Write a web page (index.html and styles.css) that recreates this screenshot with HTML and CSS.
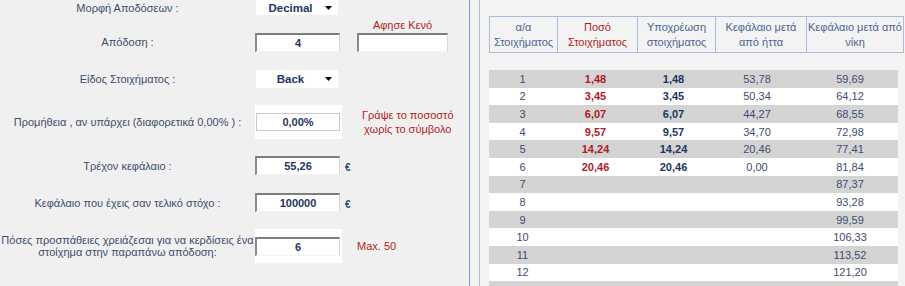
FILE: index.html
```html
<!DOCTYPE html>
<html lang="el">
<head>
    <meta charset="UTF-8">
    <title>Υπολογισμός Στοιχημάτων</title>
    <link rel="stylesheet" href="styles.css">
</head>
<body>
    <div class="page">
        <div class="calc">
            <div class="row row-format">
                <div class="label">Μορφή Αποδόσεων :</div>
                <div class="select"><span>Decimal</span><svg width="7" height="4" viewBox="0 0 7 4"><path d="M0 0h7L3.5 4z" fill="#000"/></svg></div>
            </div>
            <div class="row row-odds">
                <div class="label">Απόδοση :</div>
                <input class="field inset" type="text" value="4">
                <div class="extra">
                    <div class="note">Αφησε Κενό</div>
                    <input class="field inset field-wide" type="text" value="">
                </div>
            </div>
            <div class="row row-type">
                <div class="label">Είδος Στοιχήματος :</div>
                <div class="select"><span>Back</span><svg width="7" height="4" viewBox="0 0 7 4"><path d="M0 0h7L3.5 4z" fill="#000"/></svg></div>
            </div>
            <div class="row row-fee">
                <div class="label">Προμήθεια , αν υπάρχει (διαφορετικά 0,00% ) :</div>
                <div class="cell"><input class="field flat" type="text" value="0,00%"></div>
                <div class="note note-fee">Γράψε το ποσοστό<br>χωρίς το σύμβολο</div>
            </div>
            <div class="row row-bank">
                <div class="label">Τρέχον κεφάλαιο :</div>
                <input class="field inset" type="text" value="55,26">
                <div class="euro">€</div>
            </div>
            <div class="row row-target">
                <div class="label">Κεφάλαιο που έχεις σαν τελικό στόχο :</div>
                <input class="field inset" type="text" value="100000">
                <div class="euro">€</div>
            </div>
            <div class="row row-tries">
                <div class="label label-wrap">Πόσες προσπάθειες χρειάζεσαι για να κερδίσεις ένα<br>στοίχημα στην παραπάνω απόδοση:</div>
                <div class="cell"><input class="field inset" type="text" value="6"></div>
                <div class="note note-max">Max. 50</div>
            </div>
        </div>

        <div class="results">
            <div class="results-inner">
                <table class="head">
                    <tr>
                        <th class="c1">α/α<br>Στοιχήματος</th>
                        <th class="c2 red">Ποσό<br>Στοιχήματος</th>
                        <th class="c3">Υποχρέωση<br>στοιχήματος</th>
                        <th class="c4">Κεφάλαιο μετά<br>από ήττα</th>
                        <th class="c5">Κεφάλαιο μετά από<br>νίκη</th>
                    </tr>
                </table>
                <table class="rows" id="rows"></table>
            </div>
        </div>
    </div>

    <script>
        var data = [
            ['1', '1,48', '1,48', '53,78', '59,69'],
            ['2', '3,45', '3,45', '50,34', '64,12'],
            ['3', '6,07', '6,07', '44,27', '68,55'],
            ['4', '9,57', '9,57', '34,70', '72,98'],
            ['5', '14,24', '14,24', '20,46', '77,41'],
            ['6', '20,46', '20,46', '0,00', '81,84'],
            ['7', '', '', '', '87,37'],
            ['8', '', '', '', '93,28'],
            ['9', '', '', '', '99,59'],
            ['10', '', '', '', '106,33'],
            ['11', '', '', '', '113,52'],
            ['12', '', '', '', '121,20'],
            ['13', '', '', '', '129,40']
        ];

        var table = document.getElementById('rows');
        data.forEach(function(r) {
            var tr = document.createElement('tr');
            r.forEach(function(v, i) {
                var td = document.createElement('td');
                td.className = 'c' + (i + 1);
                td.textContent = v;
                tr.appendChild(td);
            });
            table.appendChild(tr);
        });
    </script>
</body>
</html>
```

FILE: styles.css
```css
body {
    font-family: 'Liberation Sans', Arial, sans-serif;
    font-size: 11px;
    margin: 0;
    padding: 0;
    background-color: #f0f0f0;
    color: #3d4d6e;
    overflow: hidden;
}

.page {
    display: flex;
    height: 286px;
}

/* left: form */

.calc {
    width: 469px;
    flex: none;
}

.row {
    display: grid;
    grid-template-columns: 255px 87px auto;
    align-items: center;
}

.label {
    text-align: center;
}

.label-wrap {
    line-height: 12px;
}

.row-format {
    height: 15px;
}

.row-odds {
    height: 37px;
    align-items: end;
}

.row-odds .label {
    line-height: 19px;
}

.row-type {
    margin-top: 18px;
    height: 18px;
}

.row-fee {
    margin-top: 17px;
    height: 34px;
}

.row-bank {
    margin-top: 17px;
    height: 19px;
}

.row-target {
    margin-top: 18px;
    height: 19px;
}

.row-tries {
    margin-top: 17px;
    height: 34px;
}

.select {
    display: flex;
    align-items: center;
    justify-content: space-between;
    box-sizing: border-box;
    width: 82px;
    height: 100%;
    margin-left: 1px;
    padding: 0 6px 0 0;
    background-color: #fff;
    font-weight: bold;
    font-size: 11.5px;
    color: #1f3562;
}

.select span {
    flex: 1;
    text-align: center;
}

.field {
    box-sizing: border-box;
    width: 85px;
    height: 19px;
    padding: 0;
    margin: 0;
    background-color: #fff;
    font-family: inherit;
    font-size: 11px;
    font-weight: bold;
    color: #1f3562;
    text-align: center;
    outline: none;
}

.inset {
    border-top: 2px solid #7e7e7e;
    border-left: 2px solid #8a8a8a;
    border-right: 1px solid #d6d6d6;
    border-bottom: 1px solid #f4f4f4;
}

.flat {
    width: 84px;
    height: 18px;
    margin-left: 1px;
    border: 1px solid #c9c9c9;
}

.cell {
    height: 34px;
    background-color: #fff;
    display: flex;
    align-items: center;
}

.cell .inset {
    width: 85px;
}

.extra {
    display: flex;
    flex-direction: column;
    align-items: center;
    width: 91px;
    margin-left: 15px;
}

.note {
    color: #b11e24;
    font-size: 11px;
    line-height: 14px;
    margin-bottom: 1px;
}

.field-wide {
    width: 91px;
}

.note-fee {
    justify-self: start;
    margin-left: 20px;
    text-align: center;
}

.note-max {
    justify-self: start;
    margin-left: 15px;
}

.euro {
    margin-left: 3px;
    font-weight: bold;
    font-size: 10px;
    color: #2c4c80;
    padding-top: 3px;
}

/* right: result table */

.results {
    flex: 1;
    border-left: 1px solid #7b9cc7;
    background-color: #f3f3f3;
}

.results-inner {
    margin-left: 9px;
    border-left: 1px solid #a9bfdc;
    height: 100%;
    padding-left: 9px;
    padding-top: 16px;
}

table {
    border-collapse: collapse;
    table-layout: fixed;
    width: 409px;
}

.c1 { width: 67px; }
.c2 { width: 79px; }
.c3 { width: 77px; }
.c4 { width: 90px; }
.c5 { width: 96px; }

.head th {
    height: 35px;
    padding: 0;
    border: 1px solid #a7bcdb;
    font-weight: normal;
    line-height: 15px;
    color: #4b6592;
}

.head th.red {
    color: #b11e24;
}

.rows {
    margin-top: 17px;
}

.rows td {
    height: 17.6px;
    padding: 0;
    text-align: center;
    line-height: 14px;
}

.rows tr:nth-child(odd) {
    background-color: #d4d4d4;
}

.rows tr:nth-child(even) {
    background-color: #fff;
}

.rows td.c2 {
    font-weight: bold;
    color: #b11a1f;
}

.rows td.c3 {
    font-weight: bold;
    color: #1f3562;
}
```
